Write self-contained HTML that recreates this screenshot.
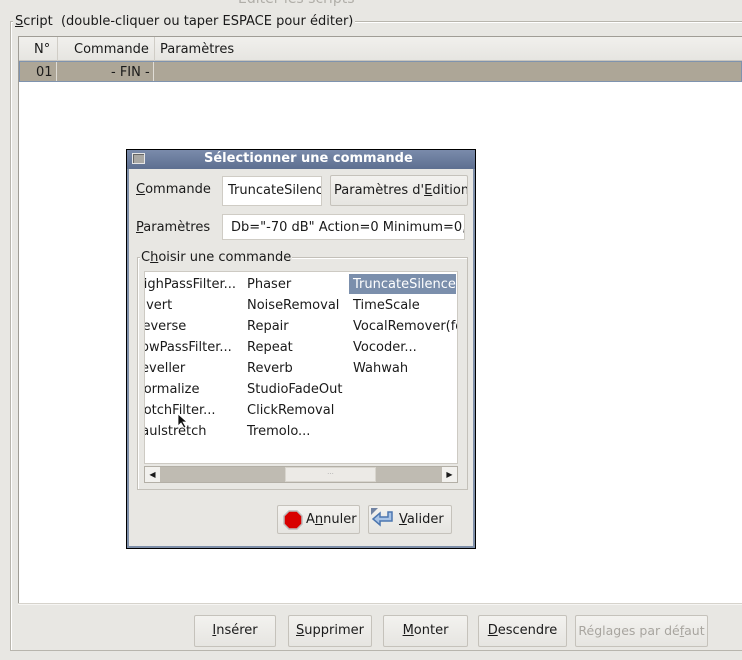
<!DOCTYPE html>
<html><head><meta charset="utf-8"><style>
*{margin:0;padding:0;box-sizing:border-box}
body{width:742px;height:660px;background:#e8e7e3;position:relative;overflow:hidden;font-family:"DejaVu Sans","Liberation Sans",sans-serif;font-size:13px;color:#1a1a1a}
.a{position:absolute;white-space:nowrap}
.btn{position:absolute;height:32px;border:1px solid #c5c2bb;border-radius:2px;background:linear-gradient(#f3f2ef,#e6e5e1);text-align:center;line-height:30px;white-space:nowrap;overflow:hidden}
u{text-decoration:underline}
</style></head><body>
<div class="a" style="left:238px;top:-9px;color:#b0aea8;font-size:14px">Editer les scripts</div>
<div class="a" style="left:10px;top:21px;width:740px;height:630px;border:1px solid #b8b5ad;border-right:none;box-shadow:inset 1px 1px 0 #fff"></div>
<div class="a" style="left:13px;top:14px;background:#e8e7e3;padding:0 2px"><u>S</u>cript&nbsp; (double-cliquer ou taper ESPACE pour éditer)</div>
<div class="a" style="left:18px;top:36px;width:724px;height:568px;background:#fff;border-left:1px solid #a09d96;border-top:1px solid #a09d96"></div>
<div class="a" style="left:19px;top:37px;width:723px;height:24px;background:linear-gradient(#f1f0ed,#e6e5e1);border-bottom:1px solid #c9c6bf"></div>
<div class="a" style="left:57px;top:37px;width:1px;height:24px;background:#d0cdc6"></div>
<div class="a" style="left:154px;top:37px;width:1px;height:24px;background:#d0cdc6"></div>
<div class="a" style="left:34px;top:42px">N°</div>
<div class="a" style="left:74px;top:42px">Commande</div>
<div class="a" style="left:160px;top:42px">Paramètres</div>
<div class="a" style="left:19px;top:61px;width:723px;height:21px;background:#ada697;border:1px solid #7f93ae"></div>
<div class="a" style="left:56px;top:62px;width:1px;height:19px;background:#e0ddd6"></div>
<div class="a" style="left:153px;top:62px;width:1px;height:19px;background:#e0ddd6"></div>
<div class="a" style="left:36px;top:65px">01</div>
<div class="a" style="left:111px;top:65px">- FIN -</div>
<div class="a" style="left:18px;top:603px;width:724px;height:2px;background:#f6f5f3;border-top:1px solid #d6d3cc"></div>
<div class="btn" style="left:194px;top:615px;width:82px"><u>I</u>nsérer</div>
<div class="btn" style="left:288px;top:615px;width:84px"><u>S</u>upprimer</div>
<div class="btn" style="left:383px;top:615px;width:85px"><u>M</u>onter</div>
<div class="btn" style="left:478px;top:615px;width:89px"><u>D</u>escendre</div>
<div class="btn" style="left:575px;top:615px;width:133px;color:#a8a59f;font-size:12.5px">Réglages par dé<u>f</u>aut</div>
<div class="a" style="left:126px;top:149px;width:350px;height:400px;border:1px solid #000;background:#e8e7e3;box-shadow:inset 0 0 0 2px #7d8ea8"></div>
<div class="a" style="left:127px;top:150px;width:348px;height:19px;background:linear-gradient(#7a8bab,#5d6f90)"></div>
<div class="a" style="left:132px;top:153px;width:13px;height:11px;background:#a9a8a4;border:1px solid #e6e6e6;box-shadow:inset 1px 1px 0 #666"></div>
<div class="a" style="left:204px;top:151px;color:#fff;font-weight:bold;font-size:13px">Sélectionner une commande</div>
<div class="a" style="left:136px;top:182px"><u>C</u>ommande</div>
<div class="a" style="left:222px;top:176px;width:100px;height:30px;background:#fff;border:1px solid #cfccc5;padding:6px 0 0 5px;overflow:hidden">TruncateSilence</div>
<div class="btn" style="left:330px;top:175px;width:138px;height:31px;text-align:left;padding-left:3px">Paramètres d'<u>E</u>dition</div>
<div class="a" style="left:136px;top:220px"><u>P</u>aramètres</div>
<div class="a" style="left:222px;top:214px;width:243px;height:26px;background:#fff;border:1px solid #cfccc5;padding:5px 0 0 8px;overflow:hidden">Db="-70 dB" Action=0 Minimum=0,0</div>
<div class="a" style="left:137px;top:257px;width:331px;height:233px;border:1px solid #c3c0b9;box-shadow:inset 1px 1px 0 #fff"></div>
<div class="a" style="left:140px;top:250px;background:#e8e7e3;padding:0 1px">C<u>h</u>oisir une commande</div>
<div class="a" style="left:144px;top:271px;width:314px;height:193px;background:#fff;border:1px solid #cdcac3;overflow:hidden;line-height:21px">
 <div class="a" style="left:-11px;top:2px">HighPassFilter...<br>Invert<br>Reverse<br>LowPassFilter...<br>Leveller<br>Normalize<br>NotchFilter...<br>Paulstretch</div>
 <div class="a" style="left:102px;top:2px">Phaser<br>NoiseRemoval<br>Repair<br>Repeat<br>Reverb<br>StudioFadeOut<br>ClickRemoval<br>Tremolo...</div>
 <div class="a" style="left:204px;top:2px;width:107px;height:20px;background:#7b8fac"></div>
 <div class="a" style="left:208px;top:2px"><span style="color:#fff">TruncateSilence</span><br>TimeScale<br>VocalRemover(for<br>Vocoder...<br>Wahwah</div>
</div>
<div class="a" style="left:144px;top:466px;width:314px;height:17px;background:#bfbbb2;border:1px solid #b3afa6"></div>
<div class="a" style="left:145px;top:467px;width:15px;height:15px;background:#f2f1ee;font-size:8px;text-align:center;line-height:15px">◀</div>
<div class="a" style="left:442px;top:467px;width:15px;height:15px;background:#f2f1ee;font-size:8px;text-align:center;line-height:15px">▶</div>
<div class="a" style="left:285px;top:467px;width:91px;height:15px;background:#eceae6;border:1px solid #d8d5ce;font-size:7px;text-align:center;line-height:12px;color:#aaa">···</div>
<div class="btn" style="left:277px;top:505px;width:83px;height:29px;line-height:28px;text-align:left;padding-left:28px">A<u>n</u>nuler</div>
<svg class="a" style="left:283px;top:510px" width="20" height="20"><polygon points="6,1 14,1 19,6 19,14 14,19 6,19 1,14 1,6" fill="#d80000" stroke="#bbb" stroke-width="1.5"/></svg>
<div class="btn" style="left:368px;top:505px;width:84px;height:29px;line-height:28px;text-align:left;padding-left:30px"><u>V</u>alider</div>
<svg class="a" style="left:370px;top:507px" width="28" height="24"><polygon points="1,1 8,1 1,8" fill="#7183a2"/><path d="M18 5 h4 v9 h-12 v4 l-7-6 l7-6 v4 h8z" fill="#a9c4e6" stroke="#4d77b0" stroke-width="1.5"/></svg>
<svg class="a" style="left:177px;top:413px" width="12" height="16"><path d="M1 1 v12 l3-3 l3 5 l2-1 l-3-5 h4z" fill="#111" stroke="#fff" stroke-width=".8"/></svg>
</body></html>
